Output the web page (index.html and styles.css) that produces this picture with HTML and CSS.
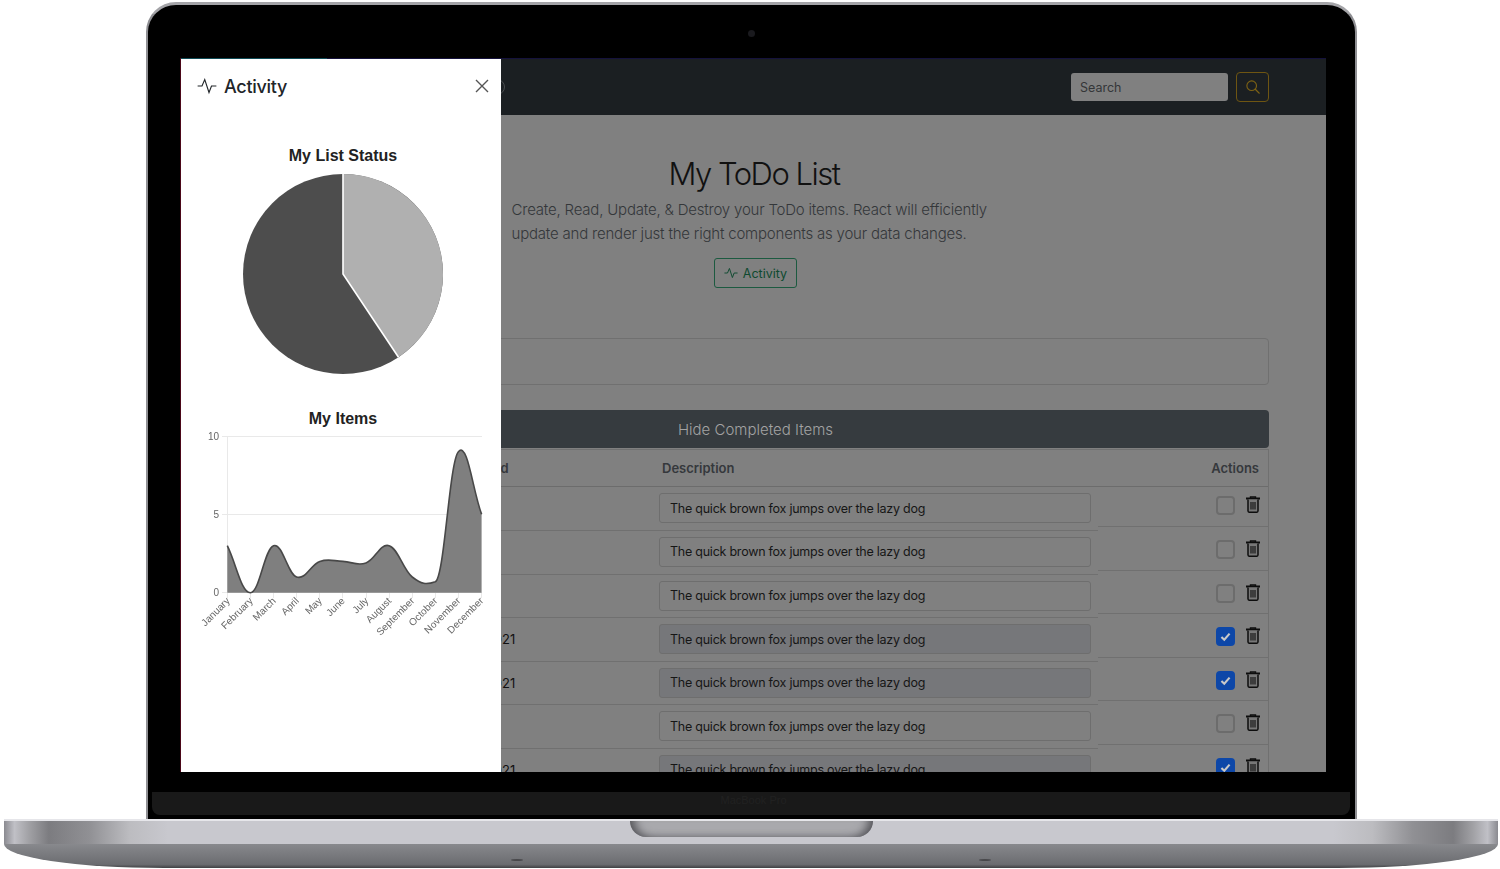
FILE: index.html
```html
<!DOCTYPE html>
<html lang="en">
<head>
    <meta charset="UTF-8">
    <title>My ToDo List</title>
    <link rel="stylesheet" href="styles.css">
</head>
<body>
<div class="lid">
    <div class="camera-bar"><span class="camera"></span></div>
    <div class="screen">
        <nav class="navbar">
            <span class="brand-mark"></span>
            <div class="nav-search">
                <input class="search-input" type="text" placeholder="Search">
                <button class="search-btn">
                    <svg width="14" height="14" viewBox="0 0 16 16"><circle cx="6.5" cy="6.5" r="5.5" fill="none" stroke="currentColor" stroke-width="1.3"/><path d="M10.6 10.6 15 15" stroke="currentColor" stroke-width="1.6" stroke-linecap="round"/></svg>
                </button>
            </div>
        </nav>
        <main class="content">
            <section class="hero">
                <h1 class="hero-title">My ToDo List</h1>
                <p class="hero-lead">Create, Read, Update, &amp; Destroy your ToDo items. React will efficiently update and render just the right components as your data changes.</p>
                <button class="activity-btn">
                    <svg width="14" height="14" viewBox="0 0 16 16"><path d="M0.5 8H4L6.2 2.8 9.6 13.2 11.6 8H15.5" fill="none" stroke="currentColor" stroke-width="1.1"/></svg>
                    Activity
                </button>
            </section>
            <div class="new-item"></div>
            <button class="hide-btn">Hide Completed Items</button>
            <div class="table">
                <div class="row row-head">
                    <div class="cell-when">Completed</div>
                    <div class="cell-desc">Description</div>
                    <div class="cell-actions">Actions</div>
                </div>
                <div class="row">
                    <div class="cell-when"></div>
                    <div class="cell-desc"><input class="item-input" type="text" value="The quick brown fox jumps over the lazy dog"></div>
                    <div class="cell-actions"><span class="check"></span><svg class="trash" viewBox="0 0 14 17"><use href="#trash"/></svg></div>
                </div>
                <div class="row">
                    <div class="cell-when"></div>
                    <div class="cell-desc"><input class="item-input" type="text" value="The quick brown fox jumps over the lazy dog"></div>
                    <div class="cell-actions"><span class="check"></span><svg class="trash" viewBox="0 0 14 17"><use href="#trash"/></svg></div>
                </div>
                <div class="row">
                    <div class="cell-when"></div>
                    <div class="cell-desc"><input class="item-input" type="text" value="The quick brown fox jumps over the lazy dog"></div>
                    <div class="cell-actions"><span class="check"></span><svg class="trash" viewBox="0 0 14 17"><use href="#trash"/></svg></div>
                </div>
                <div class="row">
                    <div class="cell-when">Oct 12, 2021</div>
                    <div class="cell-desc"><input class="item-input done" type="text" value="The quick brown fox jumps over the lazy dog"></div>
                    <div class="cell-actions"><span class="check on"><svg width="13" height="13" viewBox="0 0 16 16"><use href="#tick"/></svg></span><svg class="trash" viewBox="0 0 14 17"><use href="#trash"/></svg></div>
                </div>
                <div class="row">
                    <div class="cell-when">Oct 12, 2021</div>
                    <div class="cell-desc"><input class="item-input done" type="text" value="The quick brown fox jumps over the lazy dog"></div>
                    <div class="cell-actions"><span class="check on"><svg width="13" height="13" viewBox="0 0 16 16"><use href="#tick"/></svg></span><svg class="trash" viewBox="0 0 14 17"><use href="#trash"/></svg></div>
                </div>
                <div class="row">
                    <div class="cell-when"></div>
                    <div class="cell-desc"><input class="item-input" type="text" value="The quick brown fox jumps over the lazy dog"></div>
                    <div class="cell-actions"><span class="check"></span><svg class="trash" viewBox="0 0 14 17"><use href="#trash"/></svg></div>
                </div>
                <div class="row">
                    <div class="cell-when">Oct 12, 2021</div>
                    <div class="cell-desc"><input class="item-input done" type="text" value="The quick brown fox jumps over the lazy dog"></div>
                    <div class="cell-actions"><span class="check on"><svg width="13" height="13" viewBox="0 0 16 16"><use href="#tick"/></svg></span><svg class="trash" viewBox="0 0 14 17"><use href="#trash"/></svg></div>
                </div>
            </div>
        </main>

        <aside class="panel">
            <header class="panel-head">
                <svg width="20" height="20" viewBox="0 0 16 16"><path d="M0.5 8H4L6.2 2.8 9.6 13.2 11.6 8H15.5" fill="none" stroke="#212529" stroke-width="0.9"/></svg>
                <span class="panel-title">Activity</span>
                <svg class="panel-close" width="14" height="14" viewBox="0 0 14 14"><path d="M1 1 13 13M13 1 1 13" stroke="#555" stroke-width="1.4"/></svg>
            </header>
            <h2 class="chart-title">My List Status</h2>
            <svg class="pie" width="320" height="210" viewBox="181 170 320 210">
                <circle cx="343" cy="274" r="100" fill="#4d4d4d"/>
                <path d="M343 274V174A100 100 0 0 1 398.500 357.200Z" fill="#b0b0b0"/>
                <path d="M343 174V274L398.500 357.200" fill="none" stroke="#fff" stroke-width="1.6"/>
            </svg>
            <h2 class="chart-title chart-title-2">My Items</h2>
            <svg class="line" width="320" height="220" viewBox="181 430 320 220">
                <path class="grid" d="M222 436.500H482M222 514.500H482M222 592.500H482M227.500 436V598M250.500 593V598M273.500 593V598M296.500 593V598M319.500 593V598M342.500 593V598M366.500 593V598M389.500 593V598M412.500 593V598M435.500 593V598M458.500 593V598M481.500 593V598"/>
                <path class="area" d="M227.300 545.700C236.500 564.500 241.200 592.700 250.400 592.700C259.600 592.700 264.300 548.800 273.500 545.700C282.700 542.600 287.400 573.900 296.600 577C305.800 580.100 310.600 564.500 319.800 561.400C329 558.300 333.700 561.100 342.900 561.400C352.100 561.700 356.800 566.100 366 563C375.200 559.900 379.900 542.900 389.100 545.700C398.300 548.500 403 569.800 412.200 577C421.400 584.200 426.100 585 435.300 581.700C444.500 578 449.200 462 458.400 451.700C467.600 441 472.400 489.300 481.600 514.300V592.700H227.300Z"/>
                <path class="curve" d="M227.300 545.700C236.500 564.500 241.200 592.700 250.400 592.700C259.600 592.700 264.300 548.800 273.500 545.700C282.700 542.600 287.400 573.900 296.600 577C305.800 580.100 310.600 564.500 319.800 561.400C329 558.300 333.700 561.100 342.900 561.400C352.100 561.700 356.800 566.100 366 563C375.200 559.900 379.900 542.900 389.100 545.700C398.300 548.500 403 569.800 412.200 577C421.400 584.200 426.100 585 435.300 581.700C444.500 578 449.200 462 458.400 451.700C467.600 441 472.400 489.300 481.600 514.300"/>
                <g class="ticks-y">
                    <text x="219" y="439.500">10</text>
                    <text x="219" y="517.500">5</text>
                    <text x="219" y="595.500">0</text>
                </g>
                <g class="ticks-x">
                    <text transform="translate(230.500 601.500) rotate(-45)">January</text>
                    <text transform="translate(253.500 601.500) rotate(-45)">February</text>
                    <text transform="translate(276.500 601.500) rotate(-45)">March</text>
                    <text transform="translate(299.500 601.500) rotate(-45)">April</text>
                    <text transform="translate(322.500 601.500) rotate(-45)">May</text>
                    <text transform="translate(345.500 601.500) rotate(-45)">June</text>
                    <text transform="translate(369 601.500) rotate(-45)">July</text>
                    <text transform="translate(392 601.500) rotate(-45)">August</text>
                    <text transform="translate(415 601.500) rotate(-45)">September</text>
                    <text transform="translate(438 601.500) rotate(-45)">October</text>
                    <text transform="translate(461 601.500) rotate(-45)">November</text>
                    <text transform="translate(484 601.500) rotate(-45)">December</text>
                </g>
            </svg>
        </aside>
    </div>
    <div class="chin"><span class="chin-label">MacBook Pro</span></div>
</div>
<div class="base">
    <div class="base-top"><span class="notch"></span></div>
    <div class="base-bottom"><span class="foot"></span><span class="foot"></span></div>
</div>

<svg class="defs" width="0" height="0">
    <symbol id="trash" viewBox="0 0 14 17">
        <path d="M0.5 2.500H13.500" stroke="#0d0d0d" stroke-width="2" stroke-linecap="round"/>
        <path d="M4.500 2V1H9.500V2" fill="none" stroke="#0d0d0d" stroke-width="1.400"/>
        <path d="M2 3.500V15A1.400 1.400 0 0 0 3.400 16.200H10.600A1.400 1.400 0 0 0 12 15V3.500" fill="#777" stroke="#0d0d0d" stroke-width="1.500"/>
        <path d="M5 6V13.500M7 6V13.500M9 6V13.500" stroke="#0d0d0d" stroke-width="1.100"/>
    </symbol>
    <symbol id="tick" viewBox="0 0 16 16">
        <path d="M3 8.500 6.500 12 13 4.500" fill="none" stroke="#c9c9c9" stroke-width="2.600"/>
    </symbol>
</svg>
</body>
</html>
```

FILE: styles.css
```css
*{
    margin: 0;
    padding: 0;
    box-sizing: border-box;
}
body{
    width: 1500px;
    height: 869px;
    overflow: hidden;
    background: #ffffff;
    padding-top: 2px;
    font-family: Inter, "Liberation Sans", sans-serif;
    color: #111111;
}
.defs{
    display: block;
}

/* laptop */
.lid{
    width: 1211px;
    height: 817px;
    margin-left: 146px;
    padding: 0 29px 0 33px;
    background: #000000;
    border: 2px solid #8f8f93;
    border-top: 3px solid #a4a4a8;
    border-bottom: 0;
    border-radius: 30px 30px 0 0;
}
.camera-bar{
    height: 53px;
    display: flex;
    align-items: center;
    justify-content: center;
    padding: 4px 5px 0 0;
}
.camera{
    width: 7px;
    height: 7px;
    border-radius: 50%;
    background: #1a1a1e;
}
.screen{
    position: relative;
    width: 1145px;
    height: 714px;
    overflow: hidden;
    background: #808080;
    border-top: 1px solid;
    border-image: linear-gradient(90deg, #0e4a55 0, #0e4a55 147px, #15123c 147px) 1;
    box-shadow: -1px 0 0 #4a0718;
}
.chin{
    height: 23px;
    margin: 20px -24px 0 -29px;
    background: #191919;
    border-radius: 0 0 8px 8px;
    text-align: center;
    padding-left: 5px;
    line-height: 12px;
}
.chin-label{
    font-family: "Liberation Sans", sans-serif;
    font-size: 11px;
    color: #212121;
}
.base{
    width: 1494px;
    margin-left: 4px;
}
.base-top{
    height: 25px;
    display: flex;
    justify-content: center;
    border-top: 2px solid #e6e6ea;
    background: linear-gradient(90deg, #8a8a90 0, #c0c0c6 .7%, #a0a0a4 1.7%, #7c7c80 3%, #909094 5.7%, #bcbcc0 8.4%, #c8c8ce 11%, #c8c8ce 89%, #bcbcc0 91.6%, #909094 94.3%, #7c7c80 97%, #a0a0a4 98.3%, #c0c0c6 99.3%, #8a8a90 100%);
}
.notch{
    width: 243px;
    height: 16px;
    background: #a9a9ad;
    border-radius: 0 0 18px 18px;
    box-shadow: inset 10px -3px 10px -6px #55555a, inset -10px -3px 10px -6px #55555a;
}
.base-bottom{
    height: 24px;
    display: flex;
    justify-content: center;
    align-items: flex-end;
    gap: 456px;
    padding-bottom: 7px;
    background: linear-gradient(180deg, #88898d 0, #6b6c70 85%, #3f4043 100%);
    border-radius: 0 0 160px 160px / 0 0 24px 24px;
}
.foot{
    width: 12px;
    height: 2px;
    border-radius: 50%;
    background: #48484b;
}

/* app under the panel */
.navbar{
    height: 56px;
    display: flex;
    align-items: center;
    justify-content: space-between;
    padding: 0 57px 0 308px;
    background: #1b1f22;
}
.brand-mark{
    width: 16px;
    height: 16px;
    border: 1px solid #4a4d50;
    border-radius: 50%;
}
.nav-search{
    display: flex;
    align-items: center;
    gap: 8px;
}
.search-input{
    width: 157px;
    height: 28px;
    padding: 0 9px;
    border: 0;
    border-radius: 3px;
    background: #808080;
    font: 12.5px Inter, "Liberation Sans", sans-serif;
}
.search-input::placeholder{
    color: #343638;
    opacity: 1;
}
.search-btn{
    width: 33px;
    height: 30px;
    display: flex;
    align-items: center;
    justify-content: center;
    background: none;
    border: 1px solid #6e5512;
    border-radius: 4px;
    color: #7d6214;
}
.content{
    padding: 40px 57px 0 61px;
}
.hero{
    display: flex;
    flex-direction: column;
    align-items: center;
}
.hero-title{
    margin-right: 3px;
    font-size: 31px;
    line-height: 38px;
    font-weight: 300;
    letter-spacing: -1.5px;
}
.hero-lead{
    width: 488px;
    margin-top: 5px;
    font-size: 15px;
    line-height: 24px;
    font-weight: 300;
    letter-spacing: -0.2px;
    color: #34373a;
}
.activity-btn{
    width: 83px;
    height: 30px;
    margin-top: 12px;
    display: flex;
    align-items: center;
    justify-content: center;
    gap: 5px;
    background: none;
    border: 1px solid #1c5a40;
    border-radius: 3px;
    color: #0f4a30;
    font: 12.5px Inter, "Liberation Sans", sans-serif;
}
.new-item{
    height: 47px;
    margin-top: 50px;
    border: 1px solid #707070;
    border-radius: 4px;
}
.hide-btn{
    display: block;
    width: 100%;
    height: 38px;
    margin-top: 25px;
    border: 0;
    border-radius: 4px;
    background: #363b3f;
    color: #a3a3a3;
    font: 300 15px Inter, "Liberation Sans", sans-serif;
}
.table{
    margin-top: 1px;
    border-top: 1px solid #707070;
    border-right: 1px solid #707070;
    font-size: 13px;
}
.row{
    height: 43.6px;
    display: grid;
    grid-template-columns: 412px 444px 170px;
    align-items: start;
}
.cell-when{
    height: 100%;
    display: flex;
    align-items: center;
    padding-left: 198px;
    white-space: nowrap;
    border-bottom: 1px solid #707070;
}
.cell-desc{
    height: 100%;
    padding: 6px 7px 0 5px;
    border-bottom: 1px solid #707070;
}
.cell-actions{
    height: 39.6px;
    display: flex;
    justify-content: flex-end;
    align-items: flex-start;
    gap: 11px;
    padding: 9px 8px 0 0;
    border-bottom: 1px solid #707070;
}
.row-head{
    height: 37.4px;
    font-weight: 600;
    color: #35383c;
    border-bottom: 1px solid #6c6c6c;
}
.row-head .cell-when, .row-head .cell-desc, .row-head .cell-actions{
    height: 100%;
    border-bottom: 0;
    display: flex;
    align-items: center;
    padding-top: 0;
}
.row-head .cell-desc{
    padding-left: 8px;
}
.row-head .cell-actions{
    padding-right: 9px;
}
.item-input{
    display: block;
    width: 100%;
    height: 30px;
    padding: 0 10px;
    border: 1px solid #6e6e6e;
    border-radius: 3px;
    background: #808080;
    color: #161616;
    font: 12.5px Inter, "Liberation Sans", sans-serif;
    letter-spacing: -0.24px;
}
.item-input.done{
    background: #76777a;
}
.check{
    width: 19px;
    height: 19px;
    display: flex;
    align-items: center;
    justify-content: center;
    border: 2px solid #6c6c6c;
    border-radius: 4px;
}
.check.on{
    background: #0d47a8;
    border-color: #0d47a8;
}
.trash{
    width: 14px;
    height: 17px;
}

/* activity panel */
.panel{
    position: absolute;
    top: 0;
    left: 0;
    bottom: 0;
    width: 320px;
    background: #ffffff;
    color: #212529;
}
.panel-head{
    height: 56px;
    display: flex;
    align-items: center;
    padding: 0 12px 2px 16px;
    gap: 7px;
}
.panel-title{
    flex: 1;
    font-size: 18px;
    font-weight: 500;
    letter-spacing: -0.3px;
}
.panel-close{
    display: block;
}
.chart-title{
    margin-top: 32px;
    height: 23px;
    padding-left: 4px;
    text-align: center;
    font: bold 16px/18px "Liberation Sans", sans-serif;
    color: #222222;
}
.chart-title-2{
    margin-top: 30px;
    height: 20px;
}
.pie, .line{
    display: block;
}
.line{
    will-change: transform;
}
.grid{
    fill: none;
    stroke: #e9e9e9;
    stroke-width: 1;
}
.area{
    fill: #7f7f7f;
}
.curve{
    fill: none;
    stroke: #484848;
    stroke-width: 1.6;
}
.ticks-y text, .ticks-x text{
    font: 10px "Liberation Sans", sans-serif;
    fill: #666666;
    text-anchor: end;
}
```
